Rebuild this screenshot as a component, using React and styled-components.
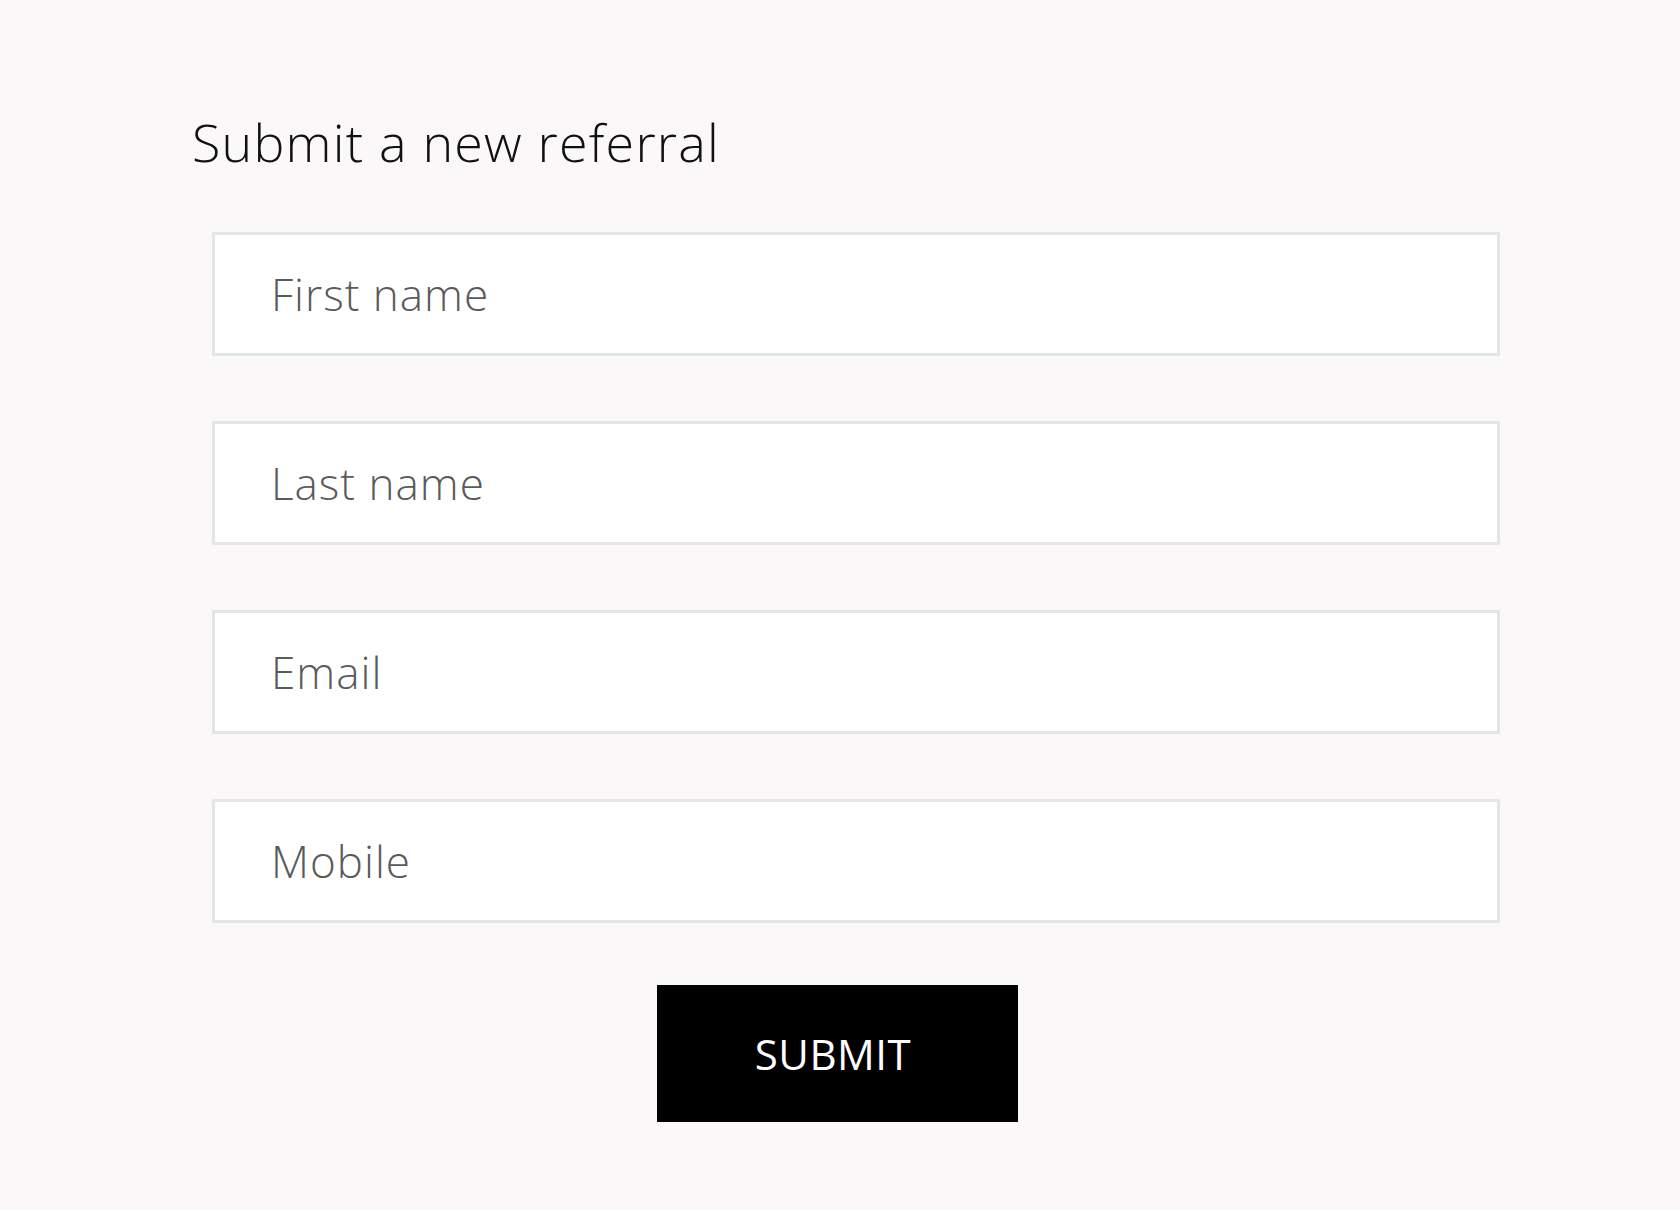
import styled, { createGlobalStyle } from 'styled-components';

const GlobalStyle = createGlobalStyle`
  html, body {
    margin: 0;
    padding: 0;
    background: #faf8f8;
  }
  * {
    box-sizing: border-box;
  }
`;

const Page = styled.div`
  width: 1680px;
  height: 1210px;
  padding: 111px 0 0 192px;
  font-family: 'Open Sans', 'Noto Sans', sans-serif;
  background: #faf8f8;
`;

const Heading = styled.h1`
  margin: 0 0 59px;
  font-size: 52px;
  line-height: 62px;
  font-weight: 300;
  letter-spacing: 1.2px;
  color: #111;
`;

const Form = styled.form`
  display: flex;
  flex-direction: column;
`;

const Fields = styled.div`
  display: flex;
  flex-direction: column;
  gap: 65px;
  margin-left: 20px;
  width: 1288px;
`;

const Field = styled.input`
  height: 124px;
  width: 100%;
  border: 3px solid #e3e6e8;
  background: #ffffff;
  padding: 0 0 0 56px;
  font-family: 'Open Sans', 'Noto Sans', sans-serif;
  font-size: 44px;
  font-weight: 300;
  letter-spacing: 1px;
  color: #333;
  outline: none;

  &::placeholder {
    color: #5a5a5a;
    opacity: 1;
  }
`;

const Actions = styled.div`
  display: flex;
  justify-content: center;
  margin: 62px 0 0 -192px;
  padding-right: 5px;
`;

const SubmitButton = styled.button`
  width: 361px;
  height: 137px;
  border: none;
  padding: 0 9px 0 0;
  background: #000;
  color: #fff;
  font-family: 'Open Sans', 'Noto Sans', sans-serif;
  font-size: 42px;
  font-weight: 400;
  letter-spacing: 0.5px;
  cursor: pointer;
`;

const fields = [
  { name: 'firstName', placeholder: 'First name', type: 'text' },
  { name: 'lastName', placeholder: 'Last name', type: 'text' },
  { name: 'email', placeholder: 'Email', type: 'email' },
  { name: 'mobile', placeholder: 'Mobile', type: 'tel' },
];

const App = () => {
  return (
    <>
      <GlobalStyle />
      <Page>
        <Heading>Submit a new referral</Heading>
        <Form onSubmit={(e) => e.preventDefault()}>
          <Fields>
            {fields.map((f) => (
              <Field key={f.name} name={f.name} type={f.type} placeholder={f.placeholder} />
            ))}
          </Fields>
          <Actions>
            <SubmitButton type='submit'>SUBMIT</SubmitButton>
          </Actions>
        </Form>
      </Page>
    </>
  );
};

export default App;
